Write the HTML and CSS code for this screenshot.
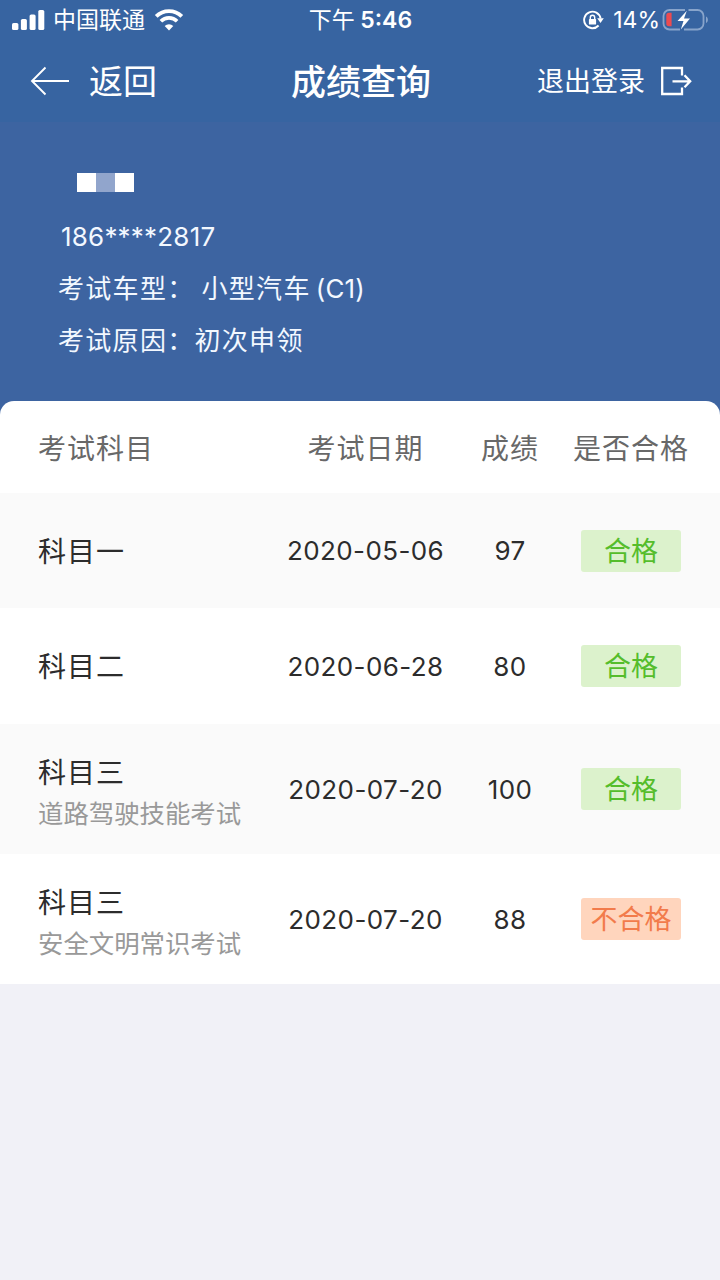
FILE: index.html
```html
<!DOCTYPE html>
<html lang="zh-CN">

<head>
    <meta charset="utf-8">
    <title>成绩查询</title>
    <link rel="stylesheet" href="styles.css">
</head>

<body>
    <header class="top">
        <div class="status-bar">
            <div class="status-left">
                <svg class="signal" width="33" height="20" viewBox="0 0 33 20" fill="#fff">
                    <rect x="0" y="13" width="6.4" height="7" rx="1.6" />
                    <rect x="8.9" y="9" width="6" height="11" rx="1.6" />
                    <rect x="17.6" y="4.5" width="6" height="15.5" rx="1.6" />
                    <rect x="26.3" y="0" width="6" height="20" rx="1.6" />
                </svg>
                <span class="carrier">中国联通</span>
                <svg class="wifi" width="30" height="22" viewBox="0 0 30 22" fill="none" stroke="#fff">
                    <path d="M2.2 7.4a18.2 18.2 0 0 1 25.6 0" stroke-width="3.9" />
                    <path d="M6.9 12.2a11.5 11.5 0 0 1 16.2 0" stroke-width="3.7" />
                    <path d="M15 21.5l-4.3-4.4a6.2 6.2 0 0 1 8.6 0z" fill="#fff" stroke="none" />
                </svg>
            </div>
            <div class="time">下午 <b>5:46</b></div>
            <div class="status-right">
                <svg class="lock" width="22" height="20" viewBox="0 0 22 20" fill="none" stroke="#fff">
                    <path d="M17.600 8.500A8.300 8.300 0 1 0 15.600 15.500" stroke-width="1.9" />
                    <path d="M14.200 8.300h6.600l-3.300 4.600z" fill="#fff" stroke="none" />
                    <rect x="5.9" y="9" width="7.2" height="5.6" rx=".7" fill="#fff" stroke="none" />
                    <path d="M7.3 9V7.4a2.2 2.2 0 0 1 4.4 0V9" stroke-width="1.4" />
                </svg>
                <span class="percent">14%</span>
                <svg class="battery" width="47" height="24" viewBox="0 0 47 24">
                    <path d="M23 2H7.5a6 6 0 0 0-6 6v7.500a6 6 0 0 0 6 6H18M26.500 2h9a6 6 0 0 1 6 6v7.500a6 6 0 0 1-6 6H22" fill="none" stroke="#88a4cb" stroke-width="1.8" />
                    <path d="M44 8.500c2.500 1 2.500 5.500 0 6.500z" fill="#88a4cb" />
                    <path d="M9.600 4.800v13.400H7a2.700 2.700 0 0 1-2.700-2.700v-8A2.700 2.700 0 0 1 7 4.800z" fill="#ed4b50" />
                    <path d="M24.800 2.800L15.500 13h6l-2.700 8.500L28 10.500h-6z" fill="#fff" />
                </svg>
            </div>
        </div>
        <nav class="nav">
            <a class="back">
                <svg width="40" height="30" viewBox="0 0 40 30" fill="none" stroke="#fff" stroke-width="1.9">
                    <path d="M15.500 1.500L2 15l13.500 13.500M2 15h37" />
                </svg>
                <span>返回</span>
            </a>
            <h1 class="title">成绩查询</h1>
            <a class="logout">
                <span>退出登录</span>
                <svg width="32" height="30" viewBox="0 0 32 30" fill="none" stroke="#fff" stroke-width="2.300">
                    <path d="M22 9.500V2H2.200v26H22v-6.500" />
                    <path d="M12.500 15.300H30M24.500 9.300l5.700 6-5.700 6" />
                </svg>
            </a>
        </nav>
    </header>

    <section class="user">
        <!-- nom masqué -->
        <div class="name">
            <i></i><i class="mid"></i><i></i>
        </div>
        <p class="phone">186****2817</p>
        <p>考试车型：<span class="car">小型汽车<span class="car-code">(C1)</span></span></p>
        <p>考试原因：<span class="reason">初次申领</span></p>
    </section>

    <main class="scores">
        <div class="row head">
            <div class="subject">考试科目</div>
            <div>考试日期</div>
            <div>成绩</div>
            <div>是否合格</div>
        </div>
        <div class="row odd">
            <div class="subject">科目一</div>
            <div class="num">2020-05-06</div>
            <div class="num">97</div>
            <div><span class="tag pass">合格</span></div>
        </div>
        <div class="row">
            <div class="subject">科目二</div>
            <div class="num">2020-06-28</div>
            <div class="num">80</div>
            <div><span class="tag pass">合格</span></div>
        </div>
        <div class="row odd tall">
            <div class="subject">科目三<small>道路驾驶技能考试</small></div>
            <div class="num">2020-07-20</div>
            <div class="num">100</div>
            <div><span class="tag pass">合格</span></div>
        </div>
        <div class="row tall">
            <div class="subject">科目三<small>安全文明常识考试</small></div>
            <div class="num">2020-07-20</div>
            <div class="num">88</div>
            <div><span class="tag fail">不合格</span></div>
        </div>
    </main>
</body>

</html>
```
FILE: styles.css
```css
* {
    box-sizing: border-box;
}

body {
    margin: 0;
    min-height: 1280px;
    background-color: #f1f1f7;
    color: #2c2c2c;
    font-family: Inter, "Noto Sans CJK SC", sans-serif;
    font-size: 28px;
}

svg {
    display: block;
    flex: none;
}

.top {
    height: 122px;
    background-color: #3764a1;
    color: #fff;
}

/* barre d'état */
.status-bar {
    display: grid;
    grid-template-columns: 1fr auto 1fr;
    align-items: center;
    height: 40px;
    padding: 0 11px 0 12px;
    font-size: 23px;
    line-height: 40px;
    white-space: nowrap;
}

.status-left,
.status-right {
    display: flex;
    align-items: center;
}

.status-right {
    justify-content: flex-end;
}

.carrier {
    margin: 0 9px 0 8px;
}

.time {
    word-spacing: -1px;
}

.time b {
    font-weight: 600;
}

.percent {
    margin: 0 2px 0 8px;
}

/* navigation */
.nav {
    display: grid;
    grid-template-columns: 1fr auto 1fr;
    align-items: center;
    height: 82px;
    padding: 0 28px 0 30px;
}

.nav span,
.title {
    padding-bottom: 4px;
}

.back,
.logout {
    display: flex;
    align-items: center;
}

.back {
    gap: 19px;
    font-size: 34px;
}

.title {
    margin: 0;
    font-size: 35px;
    font-weight: 500;
}

.logout {
    justify-content: flex-end;
    gap: 15px;
    font-size: 27px;
}

/* infos du candidat */
.user {
    height: 294px;
    padding: 51px 58px 0;
    background-color: #3d64a1;
    color: #f3f8ff;
    font-size: 26px;
    letter-spacing: 1.3px;
}

.user p {
    height: 52px;
    margin: 0;
    line-height: 52px;
    white-space: nowrap;
}

.name {
    display: flex;
    margin: 0 0 19px 19px;
}

.name i {
    width: 19px;
    height: 19px;
    background-color: #fff;
}

.name .mid {
    background-color: #91a5cc;
}

.user .phone {
    padding-left: 3px;
    letter-spacing: 0.2px;
}

.car {
    margin-left: 7px;
}

.car-code {
    margin-left: 5px;
    letter-spacing: 0.2px;
}

/* tableau des notes */
.scores {
    position: relative;
    margin-top: -15px;
    overflow: hidden;
    border-radius: 14px 14px 0 0;
    background-color: #fff;
}

.row {
    display: grid;
    grid-template-columns: 242px 171px 118px 124px;
    align-items: center;
    height: 116px;
    padding: 0 27px 0 38px;
    text-align: center;
    letter-spacing: 1px;
    white-space: nowrap;
}

.head {
    height: 92px;
    color: #686868;
    line-height: 42px;
}

.odd {
    height: 115px;
    background-color: #fafafa;
}

.tall {
    height: 130px;
}

.subject {
    padding-top: 2px;
    text-align: left;
    line-height: 42px;
}

.head div {
    padding-top: 3px;
}

.tall .subject {
    padding-top: 8px;
}

.subject small {
    display: block;
    color: #999;
    font-size: 25.4px;
    letter-spacing: 0;
    line-height: 40px;
}

.num {
    font-size: 26px;
    letter-spacing: 0.4px;
}

.tag {
    display: block;
    width: 100px;
    height: 42px;
    margin: 0 auto;
    border-radius: 3px;
    font-size: 27px;
    letter-spacing: 0;
    line-height: 44px;
}

.pass {
    background-color: #dcf2cc;
    color: #55bd2b;
}

.fail {
    background-color: #ffd5bd;
    color: #f27b4b;
}
```
